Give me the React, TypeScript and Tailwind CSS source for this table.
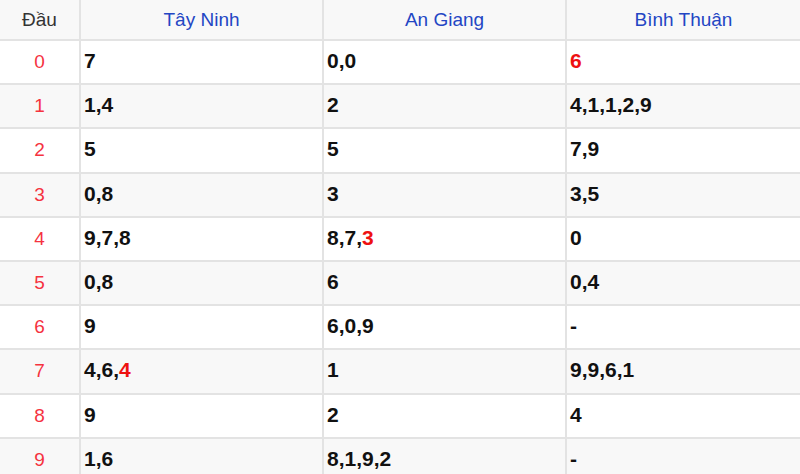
import React from "react";

type Part = { t: string; red?: boolean };
const rows: { d: string; c: Part[][] }[] = [
  { d: "0", c: [[{ t: "7" }], [{ t: "0,0" }], [{ t: "6", red: true }]] },
  { d: "1", c: [[{ t: "1,4" }], [{ t: "2" }], [{ t: "4,1,1,2,9" }]] },
  { d: "2", c: [[{ t: "5" }], [{ t: "5" }], [{ t: "7,9" }]] },
  { d: "3", c: [[{ t: "0,8" }], [{ t: "3" }], [{ t: "3,5" }]] },
  { d: "4", c: [[{ t: "9,7,8" }], [{ t: "8,7," }, { t: "3", red: true }], [{ t: "0" }]] },
  { d: "5", c: [[{ t: "0,8" }], [{ t: "6" }], [{ t: "0,4" }]] },
  { d: "6", c: [[{ t: "9" }], [{ t: "6,0,9" }], [{ t: "-" }]] },
  { d: "7", c: [[{ t: "4,6," }, { t: "4", red: true }], [{ t: "1" }], [{ t: "9,9,6,1" }]] },
  { d: "8", c: [[{ t: "9" }], [{ t: "2" }], [{ t: "4" }]] },
  { d: "9", c: [[{ t: "1,6" }], [{ t: "8,1,9,2" }], [{ t: "-" }]] },
];

export default function App() {
  return (
    <div className="w-[800px] h-[474px] overflow-hidden bg-white" style={{ fontFamily: '"Liberation Sans", Arial, sans-serif' }}>
      <div className="grid grid-cols-[79px_241px_241px_1fr] gap-[2px] bg-[#e3e3e3] pb-[2px]">
        <div className="h-[39px] bg-[#f8f8f8] flex items-center justify-center pt-[1px] text-[19px] text-[#333]">Đầu</div>
        <div className="h-[39px] bg-[#f8f8f8] flex items-center justify-center pt-[1px] text-[19px] text-[#2346c4]">Tây Ninh</div>
        <div className="h-[39px] bg-[#f8f8f8] flex items-center justify-center pt-[1px] text-[19px] text-[#2346c4]">An Giang</div>
        <div className="h-[39px] bg-[#f8f8f8] flex items-center justify-center pt-[1px] text-[19px] text-[#2346c4]">Bình Thuận</div>
        {rows.map((r, i) => {
          const bg = i % 2 === 0 ? "bg-white" : "bg-[#f8f8f8]";
          return (
            <React.Fragment key={r.d}>
              <div className={`h-[42.2px] ${bg} flex items-center justify-center pb-[1px] text-[19px] leading-none text-[#f5333f]`}>{r.d}</div>
              {r.c.map((parts, j) => (
                <div key={j} className={`h-[42.2px] ${bg} flex items-center pl-[3px] pb-[3px] text-[21px] leading-none font-bold text-[#111]`}>
                  {parts.map((p, k) => (
                    <span key={k} className={p.red ? "text-[#ee1111]" : ""}>{p.t}</span>
                  ))}
                </div>
              ))}
            </React.Fragment>
          );
        })}
      </div>
    </div>
  );
}
